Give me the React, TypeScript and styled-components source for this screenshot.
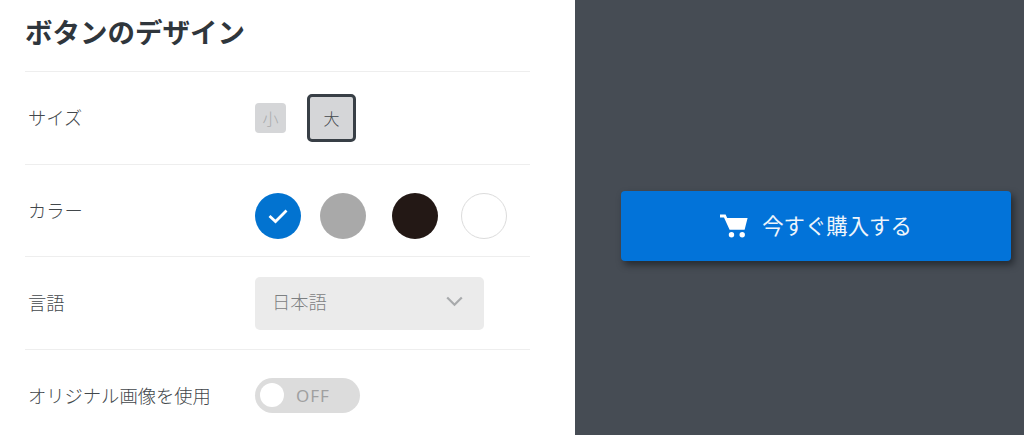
import React from "react";
import styled, { createGlobalStyle } from "styled-components";

const Global = createGlobalStyle`
  html, body { margin: 0; padding: 0; height: 100%; overflow: hidden; }
  body { font-family: "Noto Sans CJK JP", "Noto Sans", sans-serif; background: #fff; }
`;

const Page = styled.div`
  display: flex;
  width: 1024px;
  height: 435px;
`;

const Panel = styled.section`
  width: 575px;
  box-sizing: border-box;
  padding: 0 45px 0 25px;
  background: #fff;
`;

const Title = styled.h1`
  display: flex;
  align-items: center;
  height: 71px;
  margin: 0;
  padding-bottom: 8px;
  box-sizing: border-box;
  font-size: 27.5px;
  font-weight: 700;
  line-height: 1;
  color: #2f363c;
`;

const Row = styled.div<{ $height?: number }>`
  display: flex;
  align-items: center;
  height: ${(p) => p.$height ?? 93}px;
  box-sizing: border-box;
  border-top: 1px solid #eeeeee;
  padding-left: 3px;
`;

const Label = styled.div`
  width: 227px;
  flex: none;
  font-size: 18.3px;
  font-weight: 300;
  color: #42474b;
  white-space: nowrap;
  position: relative;
  top: -1px;
`;

const Sizes = styled.div`
  display: flex;
  align-items: center;
  gap: 21px;
`;

const SizeButton = styled.button<{ $selected?: boolean }>`
  display: flex;
  align-items: center;
  justify-content: center;
  box-sizing: border-box;
  padding: 0;
  background: #d5d6d8;
  font-family: inherit;
  font-weight: 300;
  width: ${(p) => (p.$selected ? "49px" : "31px")};
  height: ${(p) => (p.$selected ? "48px" : "30px")};
  border: ${(p) => (p.$selected ? "3px solid #383f46" : "none")};
  border-radius: ${(p) => (p.$selected ? "5px" : "4px")};
  color: ${(p) => (p.$selected ? "#43484c" : "#a9abad")};
  font-size: 16px;
`;

const Swatches = styled.div`
  display: flex;
  align-items: center;
  margin-top: 10px;
`;

const Swatch = styled.div<{ $color: string; $outlined?: boolean; $gap?: number }>`
  display: flex;
  align-items: center;
  justify-content: center;
  box-sizing: border-box;
  width: 46px;
  height: 46px;
  border-radius: 50%;
  margin-left: ${(p) => p.$gap ?? 0}px;
  background: ${(p) => p.$color};
  border: ${(p) => (p.$outlined ? "1px solid #dcdcdc" : "none")};
`;

const Select = styled.div`
  display: flex;
  align-items: center;
  justify-content: space-between;
  box-sizing: border-box;
  width: 229px;
  height: 53px;
  padding: 0 21px 4px 17px;
  border-radius: 5px;
  background: #ebebeb;
  color: #7d8082;
  font-size: 18.3px;
  font-weight: 300;
`;

const Toggle = styled.div`
  display: flex;
  align-items: center;
  box-sizing: border-box;
  width: 105px;
  height: 35px;
  margin-bottom: 2px;
  padding-left: 5px;
  border-radius: 18px;
  background: #dcdcdc;
`;

const Knob = styled.span`
  width: 24px;
  height: 24px;
  border-radius: 50%;
  background: #fff;
`;

const ToggleText = styled.span`
  margin-left: 12px;
  font-family: "Noto Sans", sans-serif;
  font-size: 17px;
  font-weight: 400;
  letter-spacing: 1px;
  color: #a0a0a0;
`;

const Preview = styled.section`
  flex: 1;
  display: flex;
  align-items: center;
  padding: 16px 0 0 46px;
  box-sizing: border-box;
  background: #464c54;
  height: 435px;
`;

const BuyButton = styled.button`
  display: flex;
  align-items: center;
  justify-content: center;
  gap: 14px;
  box-sizing: border-box;
  width: 390px;
  height: 70px;
  border: none;
  border-radius: 4px;
  background: #0273d9;
  color: #eef5fb;
  font-family: inherit;
  font-size: 21.4px;
  font-weight: 400;
  box-shadow: 3px 4px 7px rgba(20, 24, 30, 0.65);
`;

const BuyLabel = styled.span`
  padding-bottom: 3px;
`;

const Check = () => (
  <svg width="22" height="16" viewBox="0 0 22 16" fill="none">
    <path d="M2.5 8 L8.5 13.5 L19.5 2.5" stroke="#fff" strokeWidth="2.8" />
  </svg>
);

const Chevron = () => (
  <svg width="17" height="11" viewBox="0 0 17 11" fill="none">
    <path d="M1.2 1.5 L8.5 8.8 L15.8 1.5" stroke="#a8aaac" strokeWidth="2.2" />
  </svg>
);

const Cart = () => (
  <svg width="28" height="24" viewBox="0 0 28 24" fill="#fff">
    <path d="M0 0.5 H5.6 L7.2 4 H27.6 L24.6 15.8 H9.6 L4 3.6 H0 Z" />
    <circle cx="11.5" cy="20.8" r="2.7" />
    <circle cx="22.2" cy="20.8" r="2.7" />
  </svg>
);

export default function App() {
  return (
    <>
      <Global />
      <Page>
        <Panel>
          <Title>ボタンのデザイン</Title>
          <Row>
            <Label>サイズ</Label>
            <Sizes>
              <SizeButton>小</SizeButton>
              <SizeButton $selected>大</SizeButton>
            </Sizes>
          </Row>
          <Row $height={92}>
            <Label>カラー</Label>
            <Swatches>
              <Swatch $color="#0273d0"><Check /></Swatch>
              <Swatch $color="#a9a9a9" $gap={19} />
              <Swatch $color="#231815" $gap={26} />
              <Swatch $color="#fff" $outlined $gap={23} />
            </Swatches>
          </Row>
          <Row>
            <Label>言語</Label>
            <Select>
              <span>日本語</span>
              <Chevron />
            </Select>
          </Row>
          <Row>
            <Label>オリジナル画像を使用</Label>
            <Toggle>
              <Knob />
              <ToggleText>OFF</ToggleText>
            </Toggle>
          </Row>
        </Panel>
        <Preview>
          <BuyButton>
            <Cart />
            <BuyLabel>今すぐ購入する</BuyLabel>
          </BuyButton>
        </Preview>
      </Page>
    </>
  );
}
